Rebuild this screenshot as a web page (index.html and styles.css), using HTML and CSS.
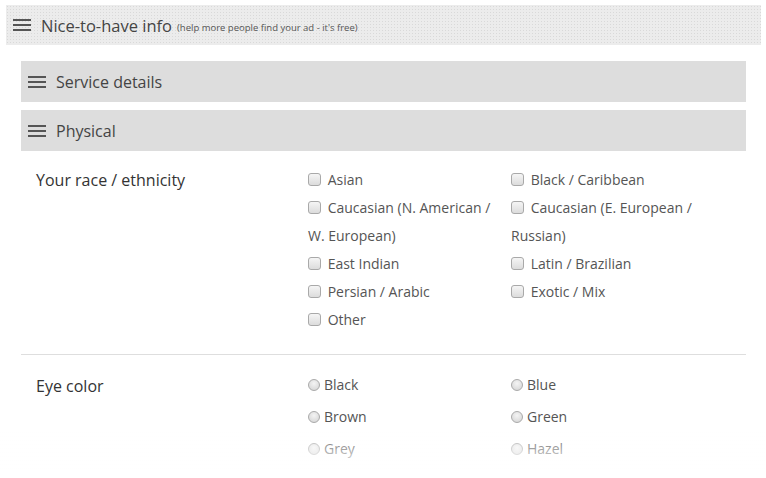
FILE: index.html
```html
<!DOCTYPE html>
<html lang="en">
<head>
  <title>Nice-to-have info</title>
  <meta name="viewport" content="width=device-width, initial-scale=1">
  <link rel="stylesheet" href="styles.css">
</head>
<body>
  <div class="panel-head">
    <span class="burger"><i></i><i></i><i></i></span>
    <span class="panel-title">Nice-to-have info</span>
    <span class="panel-note">(help more people find your ad - it's free)</span>
  </div>

  <div class="sections">
    <div class="section-bar">
      <span class="burger"><i></i><i></i><i></i></span>
      <span>Service details</span>
    </div>
    <div class="section-bar open">
      <span class="burger"><i></i><i></i><i></i></span>
      <span>Physical</span>
    </div>

    <div class="field">
      <div class="field-label">Your race / ethnicity</div>
      <div class="choices checks">
        <label><input type="checkbox" name="race"> Asian</label>
        <label><input type="checkbox" name="race"> Black / Caribbean</label>
        <label><input type="checkbox" name="race"> Caucasian (N. American / W. European)</label>
        <label><input type="checkbox" name="race"> Caucasian (E. European / Russian)</label>
        <label><input type="checkbox" name="race"> East Indian</label>
        <label><input type="checkbox" name="race"> Latin / Brazilian</label>
        <label><input type="checkbox" name="race"> Persian / Arabic</label>
        <label><input type="checkbox" name="race"> Exotic / Mix</label>
        <label><input type="checkbox" name="race"> Other</label>
      </div>
    </div>

    <div class="field eye">
      <div class="field-label">Eye color</div>
      <div class="choices radios">
        <label><input type="radio" name="eye">Black</label>
        <label><input type="radio" name="eye">Blue</label>
        <label><input type="radio" name="eye">Brown</label>
        <label><input type="radio" name="eye">Green</label>
        <label><input type="radio" name="eye">Grey</label>
        <label><input type="radio" name="eye">Hazel</label>
        <label><input type="radio" name="eye">Other</label>
      </div>
    </div>
  </div>

  <div class="fade"></div>
</body>
</html>
```

FILE: styles.css
```css
html, body {
  margin: 0;
  background: #fff;
}
body {
  font-family: "Open Sans", "DejaVu Sans", sans-serif;
  color: #444;
  overflow: hidden;
  height: 478px;
}

.panel-head {
  margin: 5px 5px 0 6px;
  height: 40px;
  display: flex;
  align-items: center;
  padding-left: 7px;
  background-color: #ececec;
  background-image: radial-gradient(#d9d9d9 0.7px, transparent 0.9px);
  background-size: 3px 3px;
}
.panel-title {
  font-size: 16.5px;
  color: #444;
  margin-left: 10px;
}
.panel-note {
  font-size: 9.5px;
  color: #555;
  margin-left: 5px;
  padding-top: 4px;
}

.burger {
  display: inline-flex;
  flex-direction: column;
  justify-content: space-between;
  width: 18px;
  height: 12px;
}
.burger i {
  display: block;
  height: 2px;
  background: #555;
}

.sections {
  margin: 16px 20px 0 21px;
}
.section-bar {
  height: 41px;
  margin-bottom: 8px;
  background: #dddddd;
  display: flex;
  align-items: center;
  padding-left: 7px;
  font-size: 16px;
  color: #444;
}
.section-bar .burger {
  margin-right: 10px;
}
.section-bar.open {
  margin-bottom: 0;
}

.field {
  display: grid;
  grid-template-columns: 287px 1fr;
  padding: 15px 0 20px;
  border-bottom: 1px solid #dedede;
}
.field-label {
  padding-left: 15px;
  font-size: 16px;
  color: #333;
  line-height: 28px;
}
.choices {
  display: grid;
  grid-template-columns: 203px 203px;
  font-size: 14px;
  color: #555;
}
.checks label {
  line-height: 28px;
  max-width: 190px;
}
.checks input {
  appearance: none;
  -webkit-appearance: none;
  width: 13px;
  height: 13px;
  margin: 0 3px 0 0;
  vertical-align: -1px;
  border: 1px solid #a9a9a9;
  border-radius: 3px;
  background: linear-gradient(#f5f5f5, #dcdcdc);
}

.eye {
  border-bottom: 0;
  padding-top: 14px;
}
.eye .field-label {
  padding-top: 3px;
}
.radios label {
  line-height: 32px;
}
.radios input {
  appearance: none;
  -webkit-appearance: none;
  width: 12px;
  height: 12px;
  margin: 0 4px 0 0;
  vertical-align: -1px;
  border: 1px solid #aaa;
  border-radius: 50%;
  background: radial-gradient(circle at 50% 35%, #f4f4f4, #d2d2d2);
}

.fade {
  position: fixed;
  left: 0;
  right: 0;
  bottom: 0;
  height: 48px;
  background: linear-gradient(rgba(255, 255, 255, 0), #fff 85%);
}
```
